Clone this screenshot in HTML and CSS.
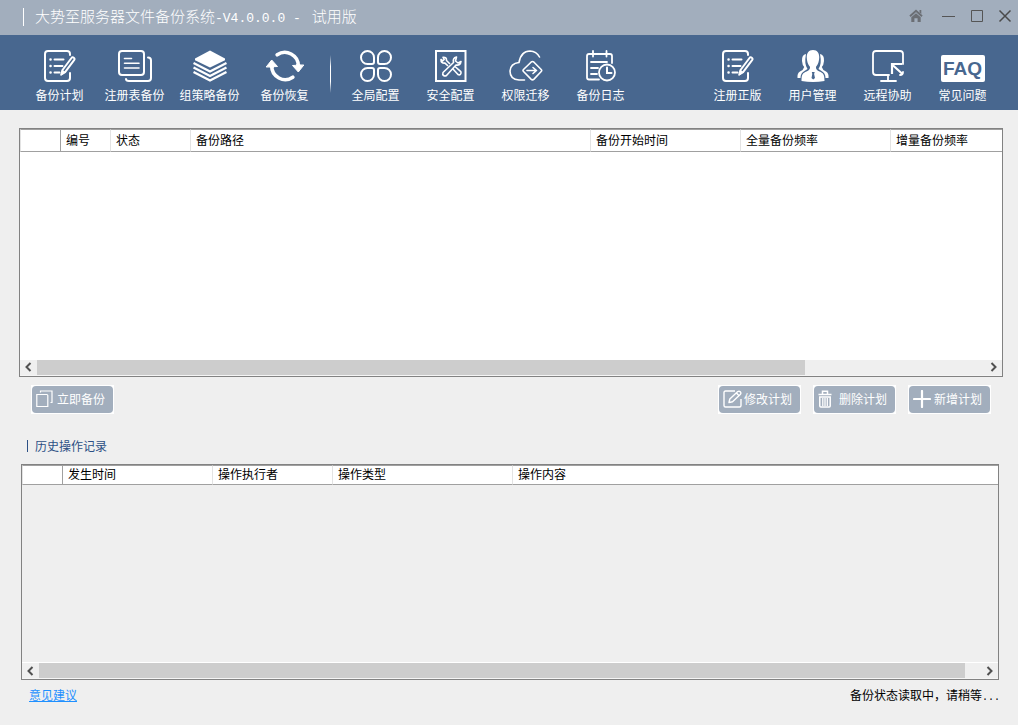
FILE: index.html
```html
<!DOCTYPE html>
<html lang="zh-CN">
<head>
<meta charset="utf-8">
<meta name="viewport" content="width=device-width, initial-scale=1">
<title>大势至服务器文件备份系统</title>
<link rel="stylesheet" href="styles.css">
</head>
<body>
<div class="app">
  <header class="titlebar">
    <h1 class="title">大势至服务器文件备份系统<span class="version">-V4.0.0.0 - </span>试用版</h1>
    <div class="window-controls">
      <button class="win-btn home" aria-label="主页"><svg width="14" height="14" viewBox="0 0 14 14"><path d="M1 7.2 7 1.8l6 5.4" fill="none" stroke="#6b6f75" stroke-width="2"/><path d="M10.5 1h1.8v4l-1.8-1.6z" fill="#6b6f75"/><path d="M2.3 8.3 7 4.2l4.7 4.1V13H8.6V9.2H5.4V13H2.3z" fill="#6b6f75"/></svg></button>
      <button class="win-btn" aria-label="最小化"><svg width="14" height="14" viewBox="0 0 14 14"><path d="M0 7.5h13" stroke="#555" fill="none"/></svg></button>
      <button class="win-btn" aria-label="最大化"><svg width="14" height="14" viewBox="0 0 14 14"><path d="M1.5 1.5h11v11h-11z" stroke="#555" fill="none"/></svg></button>
      <button class="win-btn" aria-label="关闭"><svg width="14" height="14" viewBox="0 0 14 14"><path d="m1.5 1.5 11 11m0-11-11 11" stroke="#4a4a4a" stroke-width="1.5" fill="none"/></svg></button>
    </div>
  </header>

  <nav class="toolbar">
    <button class="tool"><span class="tool-icon"><svg width="32" height="32" viewBox="0 0 32 32"><g fill="none" stroke="#fff" stroke-width="2" stroke-linecap="round" stroke-linejoin="round"><path d="M26 5V4q0-3-3-3H4Q1 1 1 4v24q0 3 3 3h19q3 0 3-3v-5"/><path d="M10.500 9.500h9M10.500 16h8M10.500 22.500h5"/><path d="M6.500 9.500h.1M6.500 16h.1M6.500 22.500h.1" stroke-width="2.500"/><path d="m18.500 20 9-12q1-1.300 2.300-.3 1.300 1 .3 2.400l-9 12-3.800 2.400z"/></g><path d="m18 19.500 3.800 2.700-5.300 3.800z" fill="#fff"/></svg></span><span class="tool-label">备份计划</span></button>
    <button class="tool"><span class="tool-icon"><svg width="34" height="32" viewBox="0 0 34 32"><g fill="none" stroke="#fff" stroke-width="2" stroke-linecap="round"><rect x="1" y="1" width="25" height="24" rx="3"/><path d="M30 7.500q3 0 3 3V28q0 3-3 3H11q-3 0-3-2"/><path d="M6.500 8.500h7M6.500 13.200h14.500M6.500 18h14.500" stroke-width="1.600"/></g></svg></span><span class="tool-label">注册表备份</span></button>
    <button class="tool"><span class="tool-icon"><svg width="34" height="32" viewBox="0 0 34 32"><path d="M17 0.500 32 8.500v1.800L17 17.500 2 10.300V8.500z" fill="#fff"/><path d="m.5 13 16.500 8.500L33.500 13M.5 17.500 17 26l16.500-8.500M.5 22 17 30.500 33.500 22" fill="none" stroke="#fff" stroke-width="2.400"/></svg></span><span class="tool-label">组策略备份</span></button>
    <button class="tool"><span class="tool-icon"><svg width="38" height="32" viewBox="0 0 38 32"><g fill="none" stroke="#fff" stroke-width="3.600" stroke-linecap="round"><path d="M11.200 4.800A13.500 13.500 0 0 1 32.300 16"/><path d="M26.800 27.200A13.500 13.500 0 0 1 5.700 16"/></g><path d="M26.500 15.500q3 .6 5.800-1.800 2.200 2 5.500 1.300L32.300 22z" fill="#fff" stroke="#fff" stroke-linejoin="round"/><path d="M11.500 16.500q-3-.6-5.800 1.800-2.200-2-5.500-1.300L5.700 10z" fill="#fff" stroke="#fff" stroke-linejoin="round"/></svg></span><span class="tool-label">备份恢复</span></button>
    <span class="divider"></span>
    <button class="tool"><span class="tool-icon"><svg width="32" height="32" viewBox="0 0 32 32"><g fill="none" stroke="#fff" stroke-width="2"><path d="M7.500 14A6.500 6.500 0 1 1 14 7.500V12q0 2-2 2z"/><path d="M24.500 14A6.500 6.500 0 1 0 18 7.500V12q0 2 2 2z"/><path d="M7.500 18A6.500 6.500 0 1 0 14 24.500V20q0-2-2-2z"/><path d="M24.500 18A6.500 6.500 0 1 1 18 24.500V20q0-2 2-2z"/></g></svg></span><span class="tool-label">全局配置</span></button>
    <button class="tool"><span class="tool-icon"><svg width="32" height="32" viewBox="0 0 32 32"><rect x="1" y="1" width="29.500" height="30" fill="none" stroke="#fff" stroke-width="2"/><g fill="none" stroke="#fff" stroke-width="1.600" stroke-linejoin="round"><path d="M21.500 7q-4 1-3 5.500L8 22.500q-.8 2 .6 3 1.400 1 2.900 0L21 15q4.500.8 5-3.500l-3 1.500-2.500-2z"/><path d="m17.500 18.500 5.500 6q1.500.8 2.500-.3t.3-2.600L20 16.500"/><path d="m15 14-3.500-3.500q.2-3.500-3.500-3.300l1.200 2.300-1.500 1.300L6 9.500q-.2 4 4 3.600l3 2.900"/></g></svg></span><span class="tool-label">安全配置</span></button>
    <button class="tool"><span class="tool-icon"><svg width="34" height="32" viewBox="0 0 34 32"><g fill="none" stroke="#fff" stroke-width="1.600" stroke-linecap="round" stroke-linejoin="round"><path d="M15.500 30H10Q1 29.500 1 21q.5-7.500 9-8.500Q12 1 21 1q6.500.2 9.500 6"/><path d="M22 12.200q1.500-1.400 3 0l7.200 7.300q1 1 0 2l-7.200 7.600q-1.500 1.400-3 0L14.500 21.500q-1-1 0-2z"/><path d="M18 20.500h9.500m-3.500-3 3.500 3-3.500 3"/></g></svg></span><span class="tool-label">权限迁移</span></button>
    <button class="tool"><span class="tool-icon"><svg width="30" height="32" viewBox="0 0 30 32"><g fill="none" stroke="#fff" stroke-width="1.800" stroke-linecap="round"><path d="M13 29.500H3q-2 0-2-2V6q0-2 2-2h21q2 0 2 2v7M7 1v5.500M20.500 1v5.500M5 12h16M5 18h7M5 24h6"/><circle cx="21" cy="22.500" r="8"/><path d="M21 17.500V23h4.500" stroke-width="2"/></g></svg></span><span class="tool-label">备份日志</span></button>
    <button class="tool push-right"><span class="tool-icon"><svg width="32" height="32" viewBox="0 0 32 32"><g fill="none" stroke="#fff" stroke-width="2" stroke-linecap="round" stroke-linejoin="round"><path d="M26 5V4q0-3-3-3H4Q1 1 1 4v24q0 3 3 3h19q3 0 3-3v-5"/><path d="M10.500 9.500h9M10.500 16h8M10.500 22.500h5"/><path d="M6.500 9.500h.1M6.500 16h.1M6.500 22.500h.1" stroke-width="2.500"/><path d="m18.500 20 9-12q1-1.300 2.300-.3 1.300 1 .3 2.400l-9 12-3.800 2.400z"/></g><path d="m18 19.500 3.800 2.700-5.300 3.800z" fill="#fff"/></svg></span><span class="tool-label">注册正版</span></button>
    <button class="tool"><span class="tool-icon"><svg width="32" height="32" viewBox="0 0 32 32"><g fill="#fff"><path d="M9 4q-4.500 1-4 7 .3 4 2.200 6Q6.500 20 3 21.500 0 23 .5 28h3q0-5 4-7l3-2Q7 14 9 4zM23 4q4.500 1 4 7-.3 4-2.200 6 .7 3 4.200 4.500 3 1.500 2.500 6.500h-3q0-5-4-7l-3-2Q25 14 23 4z"/><path d="M16 0c-5 0-6.500 4-6.200 8 .3 5 2 7.500 3.200 8.800.2 2.500-1 3.700-3.500 4.700C6 23 4.500 24 4.500 31q11.500 2 23 0c0-7-1.500-8-5-9.500-2.500-1-3.700-2.200-3.500-4.700 1.200-1.300 2.900-3.800 3.200-8.800C22.500 4 21 0 16 0z"/></g><path d="M14.800 22h2.900l-.6 2 .9 4-1.800 1.500-1.700-1.500.8-4z" fill="#48678f"/></svg></span><span class="tool-label">用户管理</span></button>
    <button class="tool"><span class="tool-icon"><svg width="32" height="32" viewBox="0 0 32 32"><g fill="none" stroke="#fff" stroke-width="1.800" stroke-linecap="round"><path d="M17 25H4q-3 0-3-3V4q0-3 3-3h24q3 0 3 3v10M31 22q0 3-3 3M16 25v5.500M9 31h15"/><path d="M20 14.500 30.500 24M20 24V14h10" stroke-width="2.200" stroke-linecap="butt"/></g></svg></span><span class="tool-label">远程协助</span></button>
    <button class="tool"><span class="tool-icon"><span class="faq">FAQ</span></span><span class="tool-label">常见问题</span></button>
  </nav>

  <main class="content">
    <section class="grid-box plans">
      <table class="grid">
        <colgroup><col class="w40"><col class="w50"><col class="w80"><col class="w400"><col class="w150"><col class="w150"><col></colgroup>
        <thead><tr><th></th><th>编号</th><th>状态</th><th>备份路径</th><th>备份开始时间</th><th>全量备份频率</th><th>增量备份频率</th></tr></thead>
        <tbody></tbody>
      </table>
      <div class="scrollbar">
        <button class="scroll-btn" aria-label="向左滚动"><svg width="8" height="10" viewBox="0 0 8 10"><path d="M5.500 1 1.500 5l4 4" fill="none" stroke="#505050" stroke-width="2"/></svg></button>
        <div class="track"><div class="thumb thumb-plans"></div></div>
        <button class="scroll-btn" aria-label="向右滚动"><svg width="8" height="10" viewBox="0 0 8 10"><path d="m1.500 1 4 4-4 4" fill="none" stroke="#505050" stroke-width="2"/></svg></button>
      </div>
    </section>

    <div class="actions">
      <button class="action"><span class="face"><svg width="18" height="18" viewBox="0 0 18 18"><g fill="none" stroke="#fff" stroke-width="1.200"><path d="M.8 4.500h10q1 0 1 1v11H.8z"/><path d="M4.500 2.500V1H16v11.500h-1.500"/></g></svg>立即备份</span></button>
      <button class="action push-right"><span class="face tight"><svg width="20" height="18" viewBox="0 0 20 18"><g fill="none" stroke="#fff" stroke-width="1.400" stroke-linejoin="round"><path d="M12 1H2.500Q1 1 1 2.500v13Q1 17 2.500 17h14q1.500 0 1.500-1.500V9"/><path d="m6 12.500.8-3.500 8-7.500q1.300-.8 2.500.3 1 1.200.2 2.400l-8 7.500zM13.500 3l2.500 2.700"/></g></svg>修改计划</span></button>
      <button class="action"><span class="face wide"><svg width="14" height="18" viewBox="0 0 14 18"><g fill="none" stroke="#fff" stroke-width="1.500"><path d="M.5 4.500h13M4.500 4V1.200h5V4M1.800 7v9q0 1 1 1h8.400q1 0 1-1V7z"/><path d="M4.800 8v8M7 8v8M9.300 8v8" stroke-width="1.300"/></g></svg>删除计划</span></button>
      <button class="action"><span class="face"><svg width="18" height="18" viewBox="0 0 18 18"><path d="M9 1v16M1 9h16" stroke="#fff" stroke-width="2.200" stroke-linecap="round"/></svg>新增计划</span></button>
    </div>

    <h2 class="history-title">历史操作记录</h2>

    <section class="grid-box history">
      <table class="grid">
        <colgroup><col class="w40"><col class="w150"><col class="w120"><col class="w180"><col></colgroup>
        <thead><tr><th></th><th>发生时间</th><th>操作执行者</th><th>操作类型</th><th>操作内容</th></tr></thead>
        <tbody></tbody>
      </table>
      <div class="scrollbar">
        <button class="scroll-btn" aria-label="向左滚动"><svg width="8" height="10" viewBox="0 0 8 10"><path d="M5.500 1 1.500 5l4 4" fill="none" stroke="#505050" stroke-width="2"/></svg></button>
        <div class="track"><div class="thumb thumb-history"></div></div>
        <button class="scroll-btn" aria-label="向右滚动"><svg width="8" height="10" viewBox="0 0 8 10"><path d="m1.500 1 4 4-4 4" fill="none" stroke="#505050" stroke-width="2"/></svg></button>
      </div>
    </section>
  </main>

  <footer class="statusbar">
    <a class="feedback" href="#feedback">意见建议</a>
    <span class="status">备份状态读取中，请稍等<span class="dots">...</span></span>
  </footer>
</div>
</body>
</html>
```

FILE: styles.css
```css
* {
  box-sizing: border-box;
}

body {
  margin: 0;
  background: #efefef;
  color: #000;
  font-family: "Noto Sans CJK SC", "Liberation Sans", sans-serif;
  font-size: 12px;
  line-height: 16px;
}

button {
  margin: 0;
  padding: 0;
  border: 0;
  background: none;
  color: inherit;
  font: inherit;
  cursor: pointer;
}

svg {
  display: block;
  flex: none;
}

.app {
  display: flex;
  flex-direction: column;
  min-height: 100vh;
}

/* Title bar */
.titlebar {
  display: flex;
  align-items: center;
  justify-content: space-between;
  height: 35px;
  padding-left: 23px;
  background: #a2aebd;
}

.title {
  display: flex;
  align-items: baseline;
  margin: 0 0 1px;
  padding-left: 11px;
  border-left: 1px solid #fff;
  color: #fff;
  font-size: 15px;
  font-weight: 300;
  line-height: 15px;
}

.version {
  padding-right: 3px;
  font-family: "Liberation Mono", monospace;
  font-size: 13px;
  white-space: pre;
}

.window-controls {
  display: flex;
  gap: 2px;
  padding-bottom: 3px;
}

.win-btn {
  display: flex;
  align-items: center;
  justify-content: center;
  width: 26px;
  height: 26px;
}

.home {
  margin-right: 5px;
}

/* Toolbar */
.toolbar {
  display: flex;
  height: 75px;
  padding: 0 18px 0 22px;
  background: #48678f;
  color: #fff;
}

.tool {
  display: flex;
  flex-direction: column;
  align-items: center;
  gap: 5px;
  width: 75px;
  padding-top: 15px;
  white-space: nowrap;
}

.tool-icon {
  display: flex;
  align-items: flex-end;
  height: 32px;
}

.faq {
  width: 44px;
  height: 27px;
  border-radius: 2px;
  background: #fff;
  color: #48678f;
  font: bold 19px/28px "Liberation Sans", sans-serif;
  text-align: center;
}

.divider {
  width: 1px;
  height: 38px;
  margin: 20px 7px 0 8px;
  background: linear-gradient(transparent, #fff 30%, #fff 70%, transparent);
}

.push-right {
  margin-left: auto;
}

/* Content */
.content {
  display: flex;
  flex: 1;
  flex-direction: column;
  padding: 18px 15px 0 19px;
}

.grid-box {
  display: flex;
  flex-direction: column;
  justify-content: space-between;
  border: 1px solid #828282;
}

.plans {
  flex: 250 0 0;
  background: #fff;
}

.history {
  flex: 217 0 0;
  margin: 0 4px 0 2px;
}

.grid {
  width: 100%;
  border-collapse: separate;
  border-spacing: 0;
  table-layout: fixed;
}

.grid th {
  height: 23px;
  padding: 0 0 2px 5px;
  border-top: 1px solid #a0a0a0;
  border-right: 1px solid #e3e3e3;
  border-bottom: 1px solid #a0a0a0;
  background: #fff;
  font-weight: 400;
  line-height: 16px;
  text-align: left;
  white-space: nowrap;
}

.history th {
  height: 20px;
}

.grid th:first-child {
  border-left: 1px solid #e3e3e3;
  border-right-color: #a0a0a0;
}

.grid th:last-child {
  border-right: 0;
}

.w40 { width: 41px; }
.w50 { width: 50px; }
.w80 { width: 80px; }
.w120 { width: 120px; }
.w150 { width: 150px; }
.w180 { width: 180px; }
.w400 { width: 400px; }

.scrollbar {
  display: flex;
  height: 17px;
  border-top: 1px solid #fff;
  border-bottom: 1px solid #f5f5f5;
  background: #efefef;
}

.scroll-btn {
  display: flex;
  align-items: center;
  justify-content: center;
  width: 17px;
}

.track {
  flex: 1;
}

.thumb {
  height: 100%;
  background: #cdcdcd;
}

.thumb-plans {
  width: 81%;
}

.thumb-history {
  width: 98.3%;
}

/* Plan actions */
.actions {
  display: flex;
  gap: 12px;
  padding: 8px 12px 0;
}

.action {
  width: 83px;
  height: 29px;
  padding: 1px;
  background: #fff;
  color: #fff;
}

.face {
  display: flex;
  align-items: center;
  gap: 3px;
  height: 27px;
  padding-left: 4px;
  border-radius: 4px;
  background: #a2aebd;
  white-space: nowrap;
}

.tight {
  gap: 1px;
}

.wide {
  gap: 7px;
}

.history-title {
  align-self: flex-start;
  margin: 26px 0 12px 8px;
  padding-left: 7px;
  border-left: 1px solid #2c5085;
  color: #2c5085;
  font-size: 12px;
  font-weight: 400;
  line-height: 12px;
}

/* Status bar */
.statusbar {
  display: flex;
  justify-content: space-between;
  padding: 7px 18px 19px 29px;
}

.feedback {
  color: #1e90ff;
  text-decoration: underline;
}

.dots {
  font-family: "Liberation Mono", monospace;
  font-size: 10px;
}
```
